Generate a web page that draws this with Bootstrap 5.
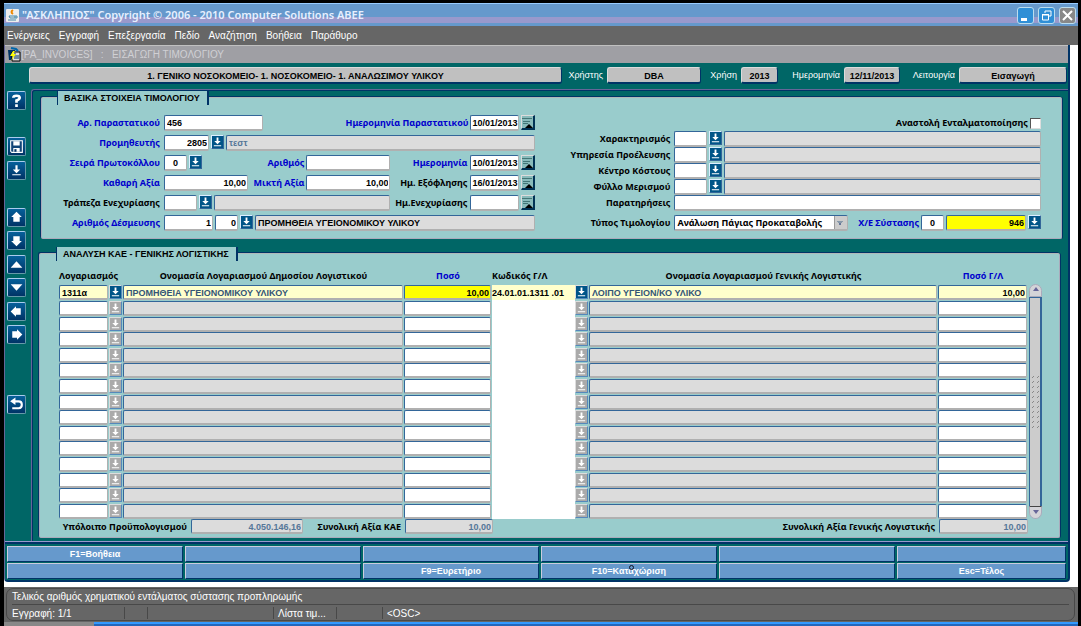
<!DOCTYPE html>
<html lang="el">
<head>
<meta charset="utf-8">
<meta name="viewport" content="width=device-width, initial-scale=1">
<title>ΑΣΚΛΗΠΙΟΣ - Εισαγωγή Τιμολογίου</title>
<link href="https://cdn.jsdelivr.net/npm/bootstrap@5.3.0/dist/css/bootstrap.min.css" rel="stylesheet">
<style>
  :root { --teal:#006666; --aqua:#99cccc; --navy:#003366; --edge:#336699; --blue:#0000cc; }
  body { background:#000; font:bold 9px/16px "Noto Sans",sans-serif; color:#000; }
  .app-window { margin:3px 3px 0 4px; background:#fff; }
  .title-bar { height:23px; padding:0 2px; color:#fff; border-top:1px solid #9cf;
    background:linear-gradient(#69c 0 13px,#99c 13px 19px,#69c 19px); }
  .title-bar h1 { font:600 11px/22px "Noto Sans",sans-serif; margin:0 0 0 3px; color:#e6f0ff; }
  .win-btn { width:17px; height:17px; padding:0; border:1px solid #bde; border-radius:3px; background:#2f8fd6; line-height:0; }
  .win-close { background:#888; }
  .menu-strip { background:#666; height:19px; padding:0 3px; font:10px/20px "Liberation Sans",sans-serif; gap:9px; }
  .menu-strip a { color:#fff; text-decoration:none; }
  .form-window { margin-right:8px; background:var(--teal); border-left:1px solid #669; border-right:2px solid var(--navy); border-bottom:2px solid var(--navy); border-radius:0 0 4px 4px; }
  .form-title { height:18px; background:#9f9fa4; border-top:1px solid #c0c0c0; color:#d0d0d4; padding-left:2px; }
  .form-title h2 { font:10px/18px "Liberation Sans",sans-serif; margin:0; white-space:pre; }
  .info-row { height:26px; padding:4px 1px 0 24px; }
  .info-row label { color:#fff; font:9px/16px "Liberation Sans",sans-serif; text-align:right; }
  .info-row input { background:#c0c0c0; text-align:center; height:17px; border:1px solid #ccc; border-color:#dcdcdc #036 #036 #dcdcdc; border-bottom-width:2px; border-radius:3px; }
  .side-tools { width:26px; padding:2px 0 0 2px; }
  .tool-btn { width:19px; height:19px; padding:0; border:1px solid #9bd; border-color:#ace #69a #69a #ace; border-radius:2px; background:linear-gradient(#06609a,#036); line-height:0; display:block; }
  .tool-stack { height:136px; }
  .frame { border:1px solid #669; border-bottom:0; border-right:0; border-radius:3px 0 0 0; padding:7px 6px 3px 9px; box-shadow:inset 1px 1px var(--navy); }
  .panel { background:var(--aqua); border:1px solid #aab; border-top-color:#b0b8b8; box-shadow:-1px -1px var(--navy),1px 0 var(--navy); border-radius:2px; }
  .panel h3 { font:bold 9px/14px "Liberation Sans",sans-serif; display:table; background:var(--aqua); border:1px solid var(--navy); border-width:0 2px 0 1px; padding:0 7px 0 6px; margin:-7px 0 0 9px; white-space:nowrap; }
  .panel-one { padding:0 20px 7px 6px; }
  .panel-two { margin:14px 2px 0 -2px; padding:0 17px 3px 19px; }
  .panel-two h3 { margin-left:-3px; }
  .halves { display:grid; grid-template-columns:488fr 482fr; column-gap:24px; margin-top:10px; }
  .field-row { display:flex; gap:2px; height:16px; align-items:stretch; }
  .field-row label { text-align:right; white-space:nowrap; }
  .req { color:var(--blue); }
  .stack { display:flex; flex-direction:column; gap:4px; }
  .grow { flex:1 1 0; min-width:0; }
  .w-lab { width:114px; padding-right:2px; } .w-mid { width:76px; padding-right:1px; } .w-right { width:113px; padding-right:2px; }
  .w-100p { width:99px; } .w-84 { width:84px; } .w-49 { width:49px; } .w-45 { width:45px; } .w-33 { width:33px; } .w-23 { width:23px; } .w-174 { width:174px; } .w-80 { width:80px; }
  .fld { font:bold 9px/12px "Liberation Sans",sans-serif; padding:1px 2px 0; min-width:0; background:#fff; color:#000; border:1px solid #b0b0b0; border-top-color:var(--edge); border-left-color:var(--edge); border-bottom-width:2px; border-radius:2px; }
  select.fld { font:bold 9px/12px "Noto Sans",sans-serif; padding:0 12px 0 2px; appearance:none;
    background:linear-gradient(#89a,#89a) right 4px top 5px/6px 1px no-repeat,linear-gradient(#89a,#89a) right 5px top 6px/4px 1px no-repeat,linear-gradient(#679,#679) right 6px top 7px/2px 2px no-repeat,linear-gradient(90deg,#999 1px,#ccc 1px) right/13px 100% no-repeat #fff; }
  .tick { appearance:none; width:11px; height:11px; margin:0; background:#fff; border:1px solid #ddd; border-top-color:#555; border-left-color:#555; }
  .tick:checked { background:#036; }
  .ro { background:#dcdcdc; color:#579; }
  .num { text-align:right; padding-right:1px; }
  .dt { padding:1px 0 0 1px; }
  .lov,.cal { padding:0; border:1px solid #cde; line-height:0; width:13px; height:14px; background:#058; flex:none; border-color:#def #369 #369 #def; }
  .cal { background:#8bb; border-color:#ddd #035 #035 #ddd; border-width:1px 2px 2px 1px; width:14px; height:15px; }
  .lov svg,.cal svg,.tool-btn svg,.win-btn svg { display:block; margin:auto; }
  .lines { table-layout:fixed; border-collapse:collapse; width:100%; }
  .lines th { padding:0; height:16px; text-align:center; white-space:nowrap; line-height:14px; vertical-align:top; }
  .lines td { padding:0 1px 0 0; height:16px; vertical-align:top; line-height:0; }
  .lines tr:nth-child(5n+3) td,.lines tbody tr:nth-child(5n) td { height:15px; }
  .lines .fld { width:100%; height:15px; }
  .lines td.code { background:#fff; padding:0; }
  .lines .code .fld { border:0; border-radius:0; background:transparent; padding:1px 0 0; }
  .lines .lov { background:#aaa; border-color:#ddd #58b #58b #ddd; }
  .lines .current .fld { background:#ffc; color:#000; }
  .lines .current .ro { color:#357; }
  .lines .current .lov { background:#058; }
  .lines .current .hot,.fld.hot { background:#ff0; }
  .scroll { width:13px; margin:15px 0 0 1px; height:235px; display:flex; flex-direction:column; align-items:stretch; }
  .scroll button { border:1px solid #aab; padding:0 0 2px; background:#d4d4d8; height:13px; border-radius:7px 7px 0 0; line-height:0; }
  .scroll button:last-child { border-radius:0 0 7px 7px; border-top-color:#444; }
  .thumb { flex:1; background:#ccc; border:1px solid var(--edge); border-width:1px 2px 0 1px; display:flex; align-items:center; justify-content:center; }
  .totals { height:15px; padding-right:14px; }
  .totals label { text-align:right; white-space:nowrap; }
  .totals .fld { height:15px; }
  .keys { display:grid; grid-template-columns:repeat(5,178fr) 171fr; gap:1px; border-top:1px solid #99c; padding:4px 1px 1px 2px; box-shadow:inset 0 2px var(--navy); }
  .keys button { height:16px; padding:0; margin-right:1px; color:#fff; background:#69c; font:bold 9px/12px "Liberation Sans",sans-serif; border:1px solid #ccd; border-right-color:var(--navy); border-bottom-color:var(--navy); position:relative; }
  .pointer { position:absolute; left:50%; top:1px; width:5px; height:5px; border:1px solid #112; border-radius:50%; }
  .status { background:#666; margin-top:5px; padding:1px 3px 1px 2px; color:#fff; font:10px/15px "Liberation Sans",sans-serif; }
  .status-in { border:1px solid #484848; border-radius:7px; height:33px; padding:0 5px; }
  .status-row span { border-right:1px solid #484848; height:12px; line-height:13px; margin-top:2px; white-space:nowrap; }
  .task { height:5px; background:linear-gradient(#39f 0 2px,#26b 2px); border-left:90px solid #888; }
</style>
</head>
<body>
<svg width="0" height="0" class="position-absolute" aria-hidden="true">
  <symbol id="i-lov" viewBox="0 0 12 12"><path fill="#fff" d="M5 1h2v4h2.500L6 8.500 2.500 5H5zM2 9.500h8v1H2z"/></symbol>
  <symbol id="i-cal" viewBox="0 0 11 11"><path fill="none" stroke="#477" d="M0 1.500h10M1 4.500h7M1 6.500h5"/><path fill="#000" d="M3 11l4-4 4 4z"/></symbol>
  <symbol id="i-fat" viewBox="0 0 16 16"><path fill="#fff" d="M8 2.500l5 5H11V12H5V7.500H3z"/></symbol>
  <symbol id="i-tri" viewBox="0 0 16 16"><path fill="#fff" d="M8 5l5.500 6h-11z"/></symbol>
</svg>
<main class="app-window">
  <header class="title-bar d-flex align-items-center">
    <svg width="13" height="13" viewBox="0 0 13 13"><rect width="13" height="13" rx="1" fill="#eee"/><path d="M3 7h6v2H4zM9 7h2v2H9M2 11h8" fill="none" stroke="#48a"/><path d="M7 1q-3 2 0 4" fill="none" stroke="#e80" stroke-width="2"/></svg>
    <h1 class="flex-grow-1">"ΑΣΚΛΗΠΙΟΣ" Copyright © 2006 - 2010 Computer Solutions ΑΒΕΕ</h1>
    <div class="d-flex gap-1">
      <button class="win-btn" aria-label="Ελαχιστοποίηση"><svg width="15" height="15"><path stroke="#fff" stroke-width="3" d="M3 11.500h6"/></svg></button>
      <button class="win-btn" aria-label="Επαναφορά"><svg width="15" height="15" fill="none" stroke="#fff"><path d="M6 5V3h6v5h-2M3.500 7h6v5h-6zM3 6.500h7"/></svg></button>
      <button class="win-btn win-close" aria-label="Κλείσιμο"><svg width="15" height="15"><path stroke="#fff" stroke-width="2" d="M3 3l9 9M12 3l-9 9"/></svg></button>
    </div>
  </header>
  <nav class="menu-strip d-flex">
    <a href="#">Ενέργειες</a><a href="#">Εγγραφή</a><a href="#">Επεξεργασία</a><a href="#">Πεδίο</a><a href="#">Αναζήτηση</a><a href="#">Βοήθεια</a><a href="#">Παράθυρο</a>
  </nav>
  <section class="form-window">
    <div class="form-title d-flex align-items-center">
      <svg width="14" height="15" viewBox="0 0 14 15"><path d="M1 3h7v10H2z" fill="#036"/><path d="M5 5h8v9H5z" fill="#ddd" stroke="#000"/><path d="M7 7h2M7 9h5M7 11h5" stroke="#036"/><path d="M4 1l5 1 2 2" fill="none" stroke="#06a" stroke-width="2"/><path d="M6 4L3 9h3l-2 5 5-7H6l2-3z" fill="#ff0"/></svg>
      <h2>[PA_INVOICES]   :   ΕΙΣΑΓΩΓΗ ΤΙΜΟΛΟΓΙΟΥ</h2>
    </div>
    <div class="info-row d-flex">
      <input class="fld grow" value="1. ΓΕΝΙΚΟ ΝΟΣΟΚΟΜΕΙΟ- 1. ΝΟΣΟΚΟΜΕΙΟ- 1. ΑΝΑΛΩΣΙΜΟΥ ΥΛΙΚΟΥ" aria-label="Φορέας" readonly>
      <label for="usr" style="width:41px">Χρήστης</label><input id="usr" class="fld ms-1" style="width:94px" value="DBA" readonly>
      <label for="yr" style="width:36px">Χρήση</label><input id="yr" class="fld ms-1" style="width:37px" value="2013" readonly>
      <label for="dat" style="width:62px">Ημερομηνία</label><input id="dat" class="fld ms-1 px-0" style="width:56px" value="12/11/2013" readonly>
      <label for="mode" style="width:55px">Λειτουργία</label><input id="mode" class="fld ms-1" style="width:108px" value="Εισαγωγή" readonly>
    </div>
    <div class="d-flex">
      <div class="side-tools flex-shrink-0">
        <button class="tool-btn" aria-label="Βοήθεια"><svg width="17" height="17" viewBox="0 0 16 16" fill="none" stroke="#fff" stroke-width="2.500"><path d="M5 5.500Q5 3.500 8 3.500t3 2Q11 7 8 8v2M8 11.500V14"/></svg></button>
        <button class="tool-btn" style="margin-top:27px" aria-label="Αποθήκευση"><svg width="17" height="17" viewBox="0 0 16 16"><path d="M2.500 2.500h11v11h-10l-1-1z" fill="#147" stroke="#fff"/><path d="M5 3h6v4H5zM5 9.500h6V13H5z" fill="#fff"/><path d="M6 10.500h2V13H6z" fill="#036"/></svg></button>
        <button class="tool-btn" style="margin-top:5px" aria-label="Λίστα"><svg width="17" height="17" viewBox="0 0 16 16"><path fill="#fff" d="M7 3h2v4h2.500L8 10.500 4.500 7H7zM4 11.500h8v1H4z"/></svg></button>
        <div class="tool-stack d-flex flex-column justify-content-between" style="margin-top:28px">
          <button class="tool-btn" aria-label="Προηγούμενο"><svg width="17" height="17"><use href="#i-fat"/></svg></button>
          <button class="tool-btn" aria-label="Επόμενο"><svg width="17" height="17" viewBox="0 0 16 16"><use href="#i-fat" transform="rotate(180 8 8)" width="16" height="16"/></svg></button>
          <button class="tool-btn" aria-label="Πάνω"><svg width="17" height="17"><use href="#i-tri"/></svg></button>
          <button class="tool-btn" aria-label="Κάτω"><svg width="17" height="17" viewBox="0 0 16 16"><use href="#i-tri" transform="rotate(180 8 8)" width="16" height="16"/></svg></button>
          <button class="tool-btn" aria-label="Αριστερά"><svg width="17" height="17" viewBox="0 0 16 16"><use href="#i-fat" transform="rotate(270 8 8)" width="16" height="16"/></svg></button>
          <button class="tool-btn" aria-label="Δεξιά"><svg width="17" height="17" viewBox="0 0 16 16"><use href="#i-fat" transform="rotate(90 8 8)" width="16" height="16"/></svg></button>
        </div>
        <button class="tool-btn" style="margin-top:51px" aria-label="Επιστροφή"><svg width="17" height="17" viewBox="0 0 16 16"><path d="M6 5h4q3 0 3 3.200T10 11.500H4" fill="none" stroke="#fff" stroke-width="2"/><path d="M2 5l5-3.500v7z" fill="#fff"/></svg></button>
      </div>
      <div class="frame flex-grow-1">
        <section class="panel panel-one">
          <h3>ΒΑΣΙΚΑ ΣΤΟΙΧΕΙΑ ΤΙΜΟΛΟΓΙΟΥ</h3>
          <div class="halves">
            <div class="stack">
              <div class="field-row"><label class="w-lab req" for="a1">Αρ. Παραστατικού</label><input id="a1" class="fld w-100p" value="456"><label class="grow req" for="a2">Ημερομηνία Παραστατικού</label><input id="a2" class="fld dt w-49" value="10/01/2013"><button class="cal" aria-label="Ημερολόγιο"><svg width="11" height="11"><use href="#i-cal"/></svg></button></div>
              <div class="field-row"><label class="w-lab req" for="b1">Προμηθευτής</label><input id="b1" class="fld num w-45" value="2805"><button class="lov" aria-label="Λίστα"><svg width="11" height="12"><use href="#i-lov"/></svg></button><input class="fld ro grow" value="τεστ" aria-label="Επωνυμία" readonly></div>
              <div class="field-row"><label class="w-lab req" for="c1">Σειρά Πρωτοκόλλου</label><input id="c1" class="fld w-23 text-center" value="0"><button class="lov" aria-label="Λίστα"><svg width="11" height="12"><use href="#i-lov"/></svg></button><label class="grow req" for="c2">Αριθμός</label><input id="c2" class="fld w-84"><label class="w-mid req" for="c3">Ημερομηνία</label><input id="c3" class="fld dt w-49" value="10/01/2013"><button class="cal" aria-label="Ημερολόγιο"><svg width="11" height="11"><use href="#i-cal"/></svg></button></div>
              <div class="field-row"><label class="w-lab req" for="d1">Καθαρή Αξία</label><input id="d1" class="fld num w-84" value="10,00"><label class="grow req" for="d2">Μικτή Αξία</label><input id="d2" class="fld num w-84" value="10,00"><label class="w-mid" for="d3">Ημ. Εξόφλησης</label><input id="d3" class="fld dt w-49" value="16/01/2013"><button class="cal" aria-label="Ημερολόγιο"><svg width="11" height="11"><use href="#i-cal"/></svg></button></div>
              <div class="field-row"><label class="w-lab" for="e1">Τράπεζα Ενεχυρίασης</label><input id="e1" class="fld w-33"><button class="lov" aria-label="Λίστα"><svg width="11" height="12"><use href="#i-lov"/></svg></button><input class="fld ro grow" aria-label="Όνομα τράπεζας" readonly><label class="w-mid" for="e3">Ημ.Ενεχυρίασης</label><input id="e3" class="fld dt w-49"><button class="cal" aria-label="Ημερολόγιο"><svg width="11" height="11"><use href="#i-cal"/></svg></button></div>
              <div class="field-row"><label class="w-lab req" for="f1">Αριθμός Δέσμευσης</label><input id="f1" class="fld num w-49" value="1"><input class="fld num w-23" value="0" aria-label="Υποαριθμός"><button class="lov" aria-label="Λίστα"><svg width="11" height="12"><use href="#i-lov"/></svg></button><input class="fld ro grow text-black" value="ΠΡΟΜΗΘΕΙΑ ΥΓΕΙΟΝΟΜΙΚΟΥ ΥΛΙΚΟΥ" aria-label="Περιγραφή" readonly></div>
            </div>
            <div>
              <div class="field-row justify-content-end align-items-center"><label for="g0">Αναστολή Ενταλματοποίησης</label><input id="g0" type="checkbox" class="tick"></div>
              <div class="field-row"><label class="w-right" for="g1">Χαρακτηρισμός</label><input id="g1" class="fld w-33"><button class="lov" aria-label="Λίστα"><svg width="11" height="12"><use href="#i-lov"/></svg></button><input class="fld ro grow" aria-label="Περιγραφή" readonly></div>
              <div class="field-row"><label class="w-right" for="g2">Υπηρεσία Προέλευσης</label><input id="g2" class="fld w-33"><button class="lov" aria-label="Λίστα"><svg width="11" height="12"><use href="#i-lov"/></svg></button><input class="fld ro grow" aria-label="Περιγραφή" readonly></div>
              <div class="field-row"><label class="w-right" for="g3">Κέντρο Κόστους</label><input id="g3" class="fld w-33"><button class="lov" aria-label="Λίστα"><svg width="11" height="12"><use href="#i-lov"/></svg></button><input class="fld ro grow" aria-label="Περιγραφή" readonly></div>
              <div class="field-row"><label class="w-right" for="g4">Φύλλο Μερισμού</label><input id="g4" class="fld w-33"><button class="lov" aria-label="Λίστα"><svg width="11" height="12"><use href="#i-lov"/></svg></button><input class="fld ro grow" aria-label="Περιγραφή" readonly></div>
              <div class="field-row"><label class="w-right" for="g5">Παρατηρήσεις</label><input id="g5" class="fld grow"></div>
              <div class="field-row mt-1"><label class="w-right" for="g6">Τύπος Τιμολογίου</label><select id="g6" class="fld w-174"><option>Ανάλωση Πάγιας Προκαταβολής</option></select><label class="grow req" for="g7">Χ/Ε Σύστασης</label><input id="g7" class="fld w-23 text-center" value="0"><input class="fld hot num w-80" value="946" aria-label="Αριθμός Χ/Ε"><button class="lov" aria-label="Λίστα"><svg width="11" height="12"><use href="#i-lov"/></svg></button></div>
            </div>
          </div>
        </section>
        <section class="panel panel-two">
          <h3>ΑΝΑΛΥΣΗ ΚΑΕ - ΓΕΝΙΚΗΣ ΛΟΓΙΣΤΙΚΗΣ</h3>
          <div class="d-flex mt-2">
            <table class="lines">
              <colgroup><col style="width:50px"><col style="width:14px"><col style="width:29%"><col style="width:88px"><col style="width:83px"><col style="width:14px"><col><col style="width:90px"></colgroup>
              <thead><tr><th colspan="2" class="text-start">Λογαριασμός</th><th>Ονομασία Λογαριασμού Δημοσίου Λογιστικού</th><th class="req">Ποσό</th><th class="text-start">Κωδικός Γ/Λ</th><th></th><th>Ονομασία Λογαριασμού Γενικής Λογιστικής</th><th class="req">Ποσό Γ/Λ</th></tr></thead>
              <tbody id="rows"></tbody>
            </table>
            <div class="scroll flex-shrink-0">
              <button aria-label="Πάνω"><svg width="8" height="5"><path fill="#669" d="M4 0l3 4H1z"/></svg></button>
              <div class="thumb"><svg width="9" height="56"><defs><pattern id="grip" width="5" height="5" patternUnits="userSpaceOnUse"><path stroke="#888" d="M1 4l2-2"/></pattern></defs><rect width="9" height="56" fill="url(#grip)"/></svg></div>
              <button aria-label="Κάτω"><svg width="8" height="5"><path fill="#669" d="M4 5l3-4H1z"/></svg></button>
            </div>
          </div>
          <div class="totals d-flex gap-1">
            <label for="t1" style="width:128px">Υπόλοιπο Προϋπολογισμού</label><input id="t1" class="fld ro num" style="width:112px" value="4.050.146,16" readonly>
            <label for="t2" style="width:94px">Συνολική Αξία ΚΑΕ</label><input id="t2" class="fld ro num" style="width:88px" value="10,00" readonly>
            <label for="t3" class="ms-auto">Συνολική Αξία Γενικής Λογιστικής</label><input id="t3" class="fld ro num" style="width:89px" value="10,00" readonly>
          </div>
        </section>
      </div>
    </div>
    <div class="keys">
      <button>F1=Βοήθεια</button><button aria-label="F2"></button><button aria-label="F3"></button><button aria-label="F4"></button><button aria-label="F5"></button><button aria-label="F6"></button>
      <button aria-label="F7"></button><button aria-label="F8"></button><button>F9=Ευρετήριο</button><button>F10=Καταχώριση<i class="pointer"></i></button><button aria-label="F11"></button><button>Esc=Τέλος</button>
    </div>
  </section>
  <footer class="status">
    <div class="status-in">
      <div style="border-bottom:1px solid #484848">Τελικός αριθμός χρηματικού εντάλματος σύστασης προπληρωμής</div>
      <div class="status-row d-flex">
        <span style="width:113px">Εγγραφή: 1/1</span><span style="width:23px"></span><span style="width:126px"></span><span style="width:63px" class="ps-1">Λίστα τιμ...</span><span style="width:46px"></span><span class="ps-1 border-0">&lt;OSC&gt;</span>
      </div>
    </div>
  </footer>
  <div class="task"></div>
</main>
<script>
  const first = ['1311α', 'ΠΡΟΜΗΘΕΙΑ ΥΓΕΙΟΝΟΜΙΚΟΥ ΥΛΙΚΟΥ', '10,00', '24.01.01.1311 .01', 'ΛΟΙΠΟ ΥΓΕΙΟΝ/ΚΟ ΥΛΙΚΟ', '10,00'];
  const lov = '<td><button class="lov" aria-label="Λίστα"><svg width="11" height="12"><use href="#i-lov"/></svg></button></td>';
  const cell = (v, c, n, td = '') => `<td class="${td}"><input class="fld ${c}" value="${v}" aria-label="${n}"></td>`;
  document.getElementById('rows').innerHTML = Array.from({length: 15}, (_, i) => {
    const d = i ? ['', '', '', '', '', ''] : first;
    return `<tr class="${i ? '' : 'current'}">` + cell(d[0], '', 'Λογαριασμός') + lov + cell(d[1], 'ro', 'Ονομασία') + cell(d[2], i ? 'num' : 'num hot', 'Ποσό')
      + cell(d[3], '', 'Κωδικός Γ/Λ', 'code') + lov + cell(d[4], 'ro', 'Ονομασία Γ/Λ') + cell(d[5], 'num', 'Ποσό Γ/Λ') + '</tr>';
  }).join('');
</script>
<script src="https://cdn.jsdelivr.net/npm/bootstrap@5.3.0/dist/js/bootstrap.bundle.min.js"></script>
</body>
</html>
